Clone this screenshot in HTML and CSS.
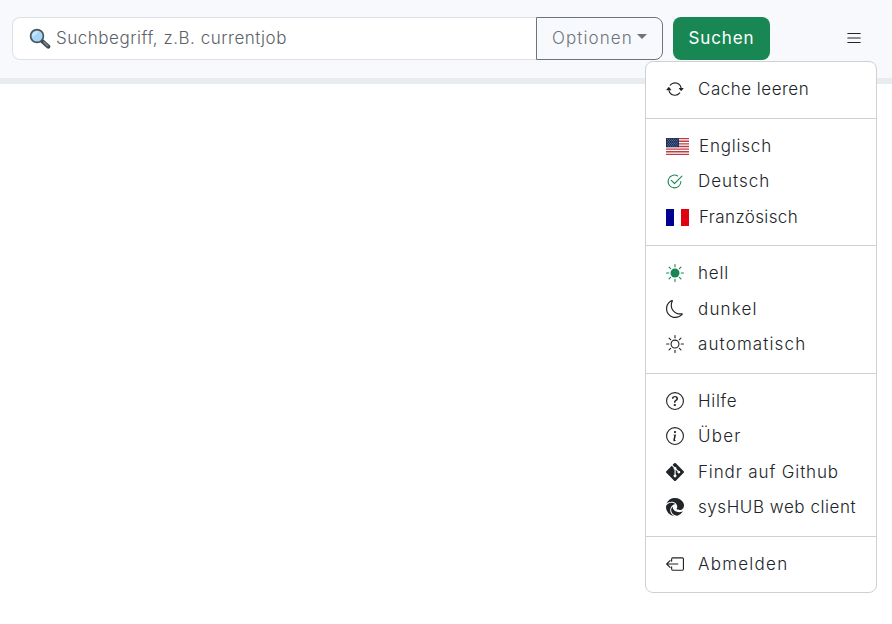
FILE: index.html
```html
<!DOCTYPE html>
<html lang="de">
<head>
<meta charset="utf-8">
<title>Findr</title>
<link rel="stylesheet" href="styles.css">
</head>
<body>
<header class="topbar">
  <div class="search">
    <div class="field">
      <svg class="lens" viewBox="0 0 22 22"><path d="M13 13l6.2 5.5" stroke="#37474f" stroke-width="4.2" stroke-linecap="round"/><path d="M14.8 14.2l4 3.6" stroke="#78858b" stroke-width="1.7" stroke-linecap="round"/><circle cx="8" cy="8" r="6.4" fill="#a5d5f7" stroke="#4b565c" stroke-width="1.7"/><path d="M3.4 9.6L9.6 3.4A5 5 0 0 0 3.4 9.6z" fill="#cfe9fb"/></svg>
      <span class="placeholder">Suchbegriff, z.B. currentjob</span>
    </div>
    <button class="options"><span>Optionen</span><i class="caret"></i></button>
  </div>
  <button class="submit">Suchen</button>
  <div class="menu-anchor">
    <button class="toggle" aria-label="Menü"><svg viewBox="0 0 16 16"><path d="M2.5 4h11M2.5 8h11M2.5 12h11" stroke="currentColor" stroke-linecap="round"/></svg></button>
    <ul class="menu">
      <li><svg viewBox="0 0 16 16"><path fill="currentColor" d="M11.534 7h3.932a.25.25 0 0 1 .192.41l-1.966 2.36a.25.25 0 0 1-.384 0l-1.966-2.36a.25.25 0 0 1 .192-.41m-11 2h3.932a.25.25 0 0 0 .192-.41L2.692 6.23a.25.25 0 0 0-.384 0L.342 8.59A.25.25 0 0 0 .534 9"/><path fill="currentColor" d="M8 3c-1.552 0-2.94.707-3.857 1.818a.5.5 0 1 1-.771-.636A6.002 6.002 0 0 1 13.917 7H12.9A5 5 0 0 0 8 3M3.1 9a5.002 5.002 0 0 0 8.757 2.182.5.5 0 1 1 .771.636A6.002 6.002 0 0 1 2.083 9z"/></svg><span class="t-cache">Cache leeren</span></li>
      <li class="divider"></li>
      <li class="lang"><svg class="flag" viewBox="0 0 23 17"><path fill="#fff" d="M0 0h23v17H0z"/><path stroke="#bd3d44" stroke-width="1.31" d="M0 .65h23M0 3.27h23M0 5.88h23M0 8.5h23M0 11.12h23M0 13.73h23M0 16.35h23"/><path fill="#192f5d" d="M0 0h13v9.15H0z"/><path stroke="#a9b2c6" stroke-width=".7" stroke-dasharray=".7 1.4" d="M1 1.2h11.5M2 2.6h10.5M1 4h11.5M2 5.4h10.5M1 6.8h11.5M2 8.1h10.5"/></svg><span class="t-en">Englisch</span></li>
      <li><svg class="green small" viewBox="0 0 16 16"><path fill="currentColor" d="M2.5 8a5.5 5.5 0 0 1 8.25-4.764.5.5 0 0 0 .5-.866A6.5 6.5 0 1 0 14.5 8a.5.5 0 0 0-1 0 5.5 5.5 0 1 1-11 0"/><path fill="currentColor" d="M15.354 3.354a.5.5 0 0 0-.708-.708L8 9.293 5.354 6.646a.5.5 0 1 0-.708.708l3 3a.5.5 0 0 0 .708 0z"/></svg><span class="t-de">Deutsch</span></li>
      <li class="lang"><svg class="flag" viewBox="0 0 23 17"><path fill="#000091" d="M0 0h8v17H0z"/><path fill="#fff" d="M8 0h7v17H8z"/><path fill="#e1000f" d="M15 0h8v17h-8z"/></svg><span class="t-fr">Französisch</span></li>
      <li class="divider"></li>
      <li><svg class="green" viewBox="0 0 16 16"><circle cx="8" cy="8" r="4" fill="currentColor"/><path d="M8 .5v2M8 13.5v2M.5 8h2M13.5 8h2M2.7 2.7l1.4 1.4M11.9 11.9l1.4 1.4M2.7 13.3l1.4-1.4M11.9 4.1l1.4-1.4" stroke="currentColor" stroke-linecap="round"/></svg><span class="t-light">hell</span></li>
      <li><svg viewBox="0 0 16 16"><path fill="currentColor" d="M6 .278a.77.77 0 0 1 .08.858 7.2 7.2 0 0 0-.878 3.46c0 4.021 3.278 7.277 7.318 7.277q.792-.001 1.533-.16a.79.79 0 0 1 .81.316.73.73 0 0 1-.031.893A8.35 8.35 0 0 1 8.344 16C3.734 16 0 12.286 0 7.71 0 4.266 2.114 1.312 5.124.06A.75.75 0 0 1 6 .278M4.858 1.311A7.27 7.27 0 0 0 1.025 7.71c0 4.02 3.279 7.276 7.319 7.276a7.32 7.32 0 0 0 5.205-2.162q-.506.063-1.029.063c-4.61 0-8.343-3.714-8.343-8.29 0-1.167.242-2.278.681-3.286"/></svg><span class="t-dark">dunkel</span></li>
      <li><svg viewBox="0 0 16 16"><circle cx="8" cy="8" r="3.5" fill="none" stroke="currentColor"/><path d="M8 .5v2M8 13.5v2M.5 8h2M13.5 8h2M2.7 2.7l1.4 1.4M11.9 11.9l1.4 1.4M2.7 13.3l1.4-1.4M11.9 4.1l1.4-1.4" stroke="currentColor" stroke-linecap="round"/></svg><span class="t-auto">automatisch</span></li>
      <li class="divider"></li>
      <li><svg viewBox="0 0 16 16"><circle cx="8" cy="8" r="7.5" fill="none" stroke="currentColor"/><path fill="currentColor" d="M5.255 5.786a.237.237 0 0 0 .241.247h.825c.138 0 .248-.113.266-.25.09-.656.54-1.134 1.342-1.134.686 0 1.314.343 1.314 1.168 0 .635-.374.927-.965 1.371-.673.489-1.206 1.06-1.168 1.987l.003.217a.25.25 0 0 0 .25.246h.811a.25.25 0 0 0 .25-.25v-.105c0-.718.273-.927 1.01-1.486.609-.463 1.244-.977 1.244-2.056 0-1.511-1.276-2.241-2.673-2.241-1.267 0-2.655.59-2.75 2.286m1.557 5.763c0 .533.425.927 1.01.927.609 0 1.028-.394 1.028-.927 0-.552-.42-.94-1.029-.94-.584 0-1.009.388-1.009.94"/></svg><span class="t-help">Hilfe</span></li>
      <li><svg viewBox="0 0 16 16"><circle cx="8" cy="8" r="7.5" fill="none" stroke="currentColor"/><path fill="currentColor" d="m8.93 6.588-2.29.287-.082.38.45.083c.294.07.352.176.288.469l-.738 3.468c-.194.897.105 1.319.808 1.319.545 0 1.178-.252 1.465-.598l.088-.416c-.2.176-.492.246-.686.246-.275 0-.375-.193-.304-.533zM9 4.5a1 1 0 1 1-2 0 1 1 0 0 1 2 0"/></svg><span class="t-about">Über</span></li>
      <li><svg viewBox="0 0 16 16"><path fill="currentColor" d="M15.698 7.287 8.712.302a1.03 1.03 0 0 0-1.457 0l-1.45 1.45 1.84 1.84a1.223 1.223 0 0 1 1.55 1.56l1.773 1.774a1.224 1.224 0 0 1 1.267 2.025 1.226 1.226 0 0 1-2.002-1.334L8.58 5.963v4.353a1.226 1.226 0 1 1-1.008-.036V5.887a1.226 1.226 0 0 1-.666-1.608L5.093 2.465l-4.79 4.79a1.03 1.03 0 0 0 0 1.457l6.986 6.986a1.03 1.03 0 0 0 1.457 0l6.953-6.953a1.03 1.03 0 0 0 0-1.457"/></svg><span class="t-git">Findr auf Github</span></li>
      <li><svg viewBox="0 0 16 16"><path fill="currentColor" d="M9.482 9.341c-.069.062-.17.153-.17.309 0 .162.107.325.3.456.877.613 2.521.54 2.592.538h.002c.667 0 1.32-.18 1.894-.519A3.84 3.84 0 0 0 16 6.819c.018-1.316-.44-2.218-.666-2.664l-.04-.08C13.963 1.487 11.106 0 8 0A8 8 0 0 0 .473 5.29C1.488 4.048 3.183 3.262 5 3.262c2.83 0 5.01 1.885 5.01 4.797h-.004v.002c0 .338-.168.832-.487 1.244z"/><path fill="currentColor" d="M.01 7.753a8.14 8.14 0 0 0 .753 3.641 8 8 0 0 0 6.495 4.564 5 5 0 0 1-.785-.377h-.01l-.12-.075a5.5 5.5 0 0 1-1.56-1.463A5.543 5.543 0 0 1 6.81 5.8l.01-.004.025-.012c.208-.098.62-.292 1.167-.285q.194.001.384.033a4 4 0 0 0-.993-.698l-.01-.005C6.348 4.282 5.199 4.263 5 4.263c-2.44 0-4.824 1.634-4.99 3.49"/><path fill="currentColor" d="M10.228 15.667a5 5 0 0 0 .303-.086l.082-.025a8.02 8.02 0 0 0 4.162-3.3.25.25 0 0 0-.331-.35q-.322.168-.663.294a6.4 6.4 0 0 1-2.243.4c-2.957 0-5.532-2.031-5.532-4.644q.003-.203.046-.399a4.54 4.54 0 0 0-.46 5.898l.003.005c.315.441.707.821 1.158 1.121h.003l.144.09c.877.55 1.721 1.078 3.328.996"/></svg><span class="t-hub">sysHUB web client</span></li>
      <li class="divider"></li>
      <li><svg viewBox="0 0 16 16"><path d="M5 5.500V3.500a1 1 0 0 1 1-1h8.500a1 1 0 0 1 1 1v9a1 1 0 0 1-1 1H6a1 1 0 0 1-1-1v-2M10.500 8H.8M3.600 5L.6 8l3 3" fill="none" stroke="currentColor" stroke-linecap="round" stroke-linejoin="round"/></svg><span class="t-out">Abmelden</span></li>
    </ul>
  </div>
</header>
</body>
</html>
```
FILE: styles.css
```css
* { box-sizing: border-box; }
body {
  margin: 0;
  min-height: 624px;
  background: #fff;
  color: #212529;
  font: 300 17px/26px Inter, "Liberation Sans", sans-serif;
}
button { font: inherit; margin: 0; }
.topbar {
  display: flex;
  height: 84px;
  padding: 17px 15px 0 12px;
  background: #f8f9fc;
  border-bottom: 6px solid #e9ecef;
}
.search { display: flex; width: 651px; height: 43px; }
.field {
  display: flex;
  align-items: center;
  flex: 1;
  padding-left: 16px;
  background: #fff;
  border: 1px solid #dee2e6;
  border-right: 0;
  border-radius: 8px 0 0 8px;
  color: #5c6268;
}
.lens { width: 22px; height: 22px; margin-right: 5px; fill: none; }
.placeholder { letter-spacing: .52px; padding-bottom: 1px; }
.options {
  display: flex;
  align-items: center;
  width: 127px;
  padding: 0 0 1px 15px;
  background: transparent;
  border: 1px solid #6c757d;
  border-radius: 0 8px 8px 0;
  color: #6c757d;
  font-weight: 300;
  letter-spacing: 1.1px;
}
.options span { width: 81px; text-align: left; white-space: nowrap; }
.caret {
  margin: -3px 0 0 4px;
  border: 5px solid transparent;
  border-top-color: #6c757d;
  border-bottom: 0;
}
.submit {
  width: 97px;
  height: 43px;
  margin-left: 10px;
  padding: 0 0 1px;
  background: #198754;
  border: 0;
  border-radius: 8px;
  color: #fff;
  font-weight: 400;
  letter-spacing: .85px;
}
.menu-anchor { position: relative; flex: 1; }
.toggle {
  display: flex;
  align-items: center;
  justify-content: center;
  width: 18px;
  height: 41px;
  margin-left: auto;
  margin-right: 14px;
  padding: 0;
  background: none;
  border: 0;
  color: #212529;
}
.toggle svg { width: 18px; height: 18px; flex: none; }
.menu {
  position: absolute;
  z-index: 5;
  top: 44px;
  right: 0;
  width: 232px;
  margin: 0;
  padding: 10px 0;
  list-style: none;
  background: #fff;
  border: 1px solid #cfd0d1;
  border-radius: 8px;
}
.menu li {
  display: flex;
  align-items: center;
  height: 35.5px;
  padding: 0 0 1px 20px;
  white-space: nowrap;
}
.menu .divider { height: 1px; margin: 10px 0; padding: 0; background: #cfd0d1; }
.menu svg { width: 18px; height: 18px; margin-right: 14px; flex: none; }
.menu .small { width: 17px; height: 17px; margin: 0 15px 0 0; }
.menu .flag { width: 23px; height: 17px; margin: 1px 10px 0 0; }
.green { color: #198754; }
.t-cache { letter-spacing: .5px; }
.t-en { letter-spacing: .8px; }
.t-de { letter-spacing: 1px; }
.t-fr { letter-spacing: .38px; }
.t-light { letter-spacing: .8px; }
.t-dark { letter-spacing: 1.15px; }
.t-auto { letter-spacing: 1.13px; }
.t-help { letter-spacing: .7px; }
.t-about { letter-spacing: 1.2px; }
.t-git { letter-spacing: .87px; }
.t-hub { letter-spacing: .56px; }
.t-out { letter-spacing: 1.25px; }
```
